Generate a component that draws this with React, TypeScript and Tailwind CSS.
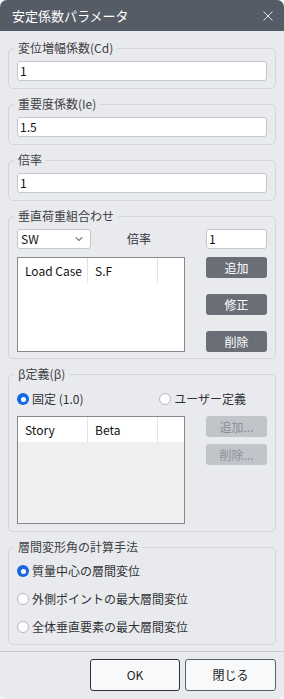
import { ChevronDown } from 'lucide-react'

const font = "font-['Noto_Sans_CJK_JP','Noto_Sans',sans-serif]"

function Radio({ checked, label, className = '' }: { checked?: boolean; label: string; className?: string }) {
  return (
    <div className={`flex items-center h-[16px] ${className}`}>
      {checked ? (
        <span className="w-[12px] h-[12px] rounded-full bg-[#1668e3] flex items-center justify-center">
          <span className="w-[5px] h-[5px] rounded-full bg-white" />
        </span>
      ) : (
        <span className="w-[12px] h-[12px] rounded-full bg-white border border-[#b4b8be]" />
      )}
      <span className="ml-[3px] text-[12px] leading-[16px] text-[#303236]">{label}</span>
    </div>
  )
}

function Group({ title, children, className = '' }: { title: string; children: React.ReactNode; className?: string }) {
  return (
    <fieldset className={`border border-[#d3d5da] rounded-[5px] px-2 ${className}`}>
      <legend className="ml-[-3px] px-[4px] text-[12px] leading-[16px] text-[#3e4044]">{title}</legend>
      {children}
    </fieldset>
  )
}

function TextBox({ value }: { value: string }) {
  return (
    <div className="h-[20px] bg-white border border-[#c3c7cd] rounded-[3px] pl-[2px] flex items-center text-[12px] text-[#111]">
      <span>{value}</span>
    </div>
  )
}

function DarkButton({ label }: { label: string }) {
  return (
    <div className="h-[21px] rounded-[3px] bg-[#6a6f77] text-white text-[12px] flex items-center justify-center">
      {label}
    </div>
  )
}

function GreyButton({ label }: { label: string }) {
  return (
    <div className="h-[21px] rounded-[3px] bg-[#c1c5ca] text-[#8b9097] text-[12px] flex items-center justify-center">
      {label}
    </div>
  )
}

export default function App() {
  return (
    <div className={`w-[284px] h-[699px] bg-[#f5f5f5] ${font}`}>
      <div className="h-full rounded-[7px] bg-[#e9eaee] flex flex-col overflow-hidden">
        <div className="h-[31px] bg-[#565c66] flex items-center justify-between pl-[12px] pr-[11px] shrink-0">
          <span className="text-[13px] text-white">安定係数パラメータ</span>
          <svg width="10" height="10" viewBox="0 0 10 10" className="text-[#e4e6ea]">
            <path d="M0.5 0.5 L9.5 9.5 M9.5 0.5 L0.5 9.5" stroke="currentColor" strokeWidth="1" />
          </svg>
        </div>

        <div className="flex-1 px-2 pt-[9px] flex flex-col gap-[7px]">
          <Group title="変位増幅係数(Cd)" className="pb-[7px]">
            <div className="mt-[5px]">
              <TextBox value="1" />
            </div>
          </Group>
          <Group title="重要度係数(Ie)" className="pb-[7px]">
            <div className="mt-[5px]">
              <TextBox value="1.5" />
            </div>
          </Group>
          <Group title="倍率" className="pb-[7px]">
            <div className="mt-[5px]">
              <TextBox value="1" />
            </div>
          </Group>

          <Group title="垂直荷重組合わせ" className="pb-[6px]">
            <div className="mt-[5px] flex items-center">
              <div className="w-[74px] h-[20px] bg-white border border-[#c3c7cd] rounded-[3px] pl-[3px] pr-[5px] flex items-center justify-between text-[12px] text-[#111]">
                <span>SW</span>
                <ChevronDown size={12} strokeWidth={2.2} className="text-[#7a7e85]" />
              </div>
              <span className="ml-[36px] text-[12px] text-[#303236]">倍率</span>
              <div className="ml-auto w-[61px]">
                <TextBox value="1" />
              </div>
            </div>
            <div className="mt-[8px] flex">
              <div className="w-[168px] h-[95px] bg-white border border-[#85888d]">
                <div className="h-[25px] flex text-[12px] text-[#111]">
                  <div className="w-[70px] border-r border-[#e2e3e6] pl-[7px] flex items-center">Load Case</div>
                  <div className="w-[70px] border-r border-[#e2e3e6] pl-[7px] flex items-center">S.F</div>
                </div>
              </div>
              <div className="ml-auto w-[61px] flex flex-col justify-between">
                <DarkButton label="追加" />
                <DarkButton label="修正" />
                <DarkButton label="削除" />
              </div>
            </div>
          </Group>

          <Group title="β定義(β)" className="pb-[7px]">
            <div className="mt-[9px] flex items-center pr-[21px]">
              <Radio checked label="固定 (1.0)" />
              <Radio label="ユーザー定義" className="ml-auto" />
            </div>
            <div className="mt-[9px] flex">
              <div className="w-[168px] h-[108px] bg-[#efeff0] border border-[#85888d] flex flex-col">
                <div className="h-[25px] bg-white flex text-[12px] text-[#111]">
                  <div className="w-[70px] border-r border-[#e2e3e6] pl-[7px] flex items-center">Story</div>
                  <div className="w-[70px] border-r border-[#e2e3e6] pl-[7px] flex items-center">Beta</div>
                </div>
              </div>
              <div className="ml-auto w-[61px] flex flex-col gap-[7px]">
                <GreyButton label="追加..." />
                <GreyButton label="削除..." />
              </div>
            </div>
          </Group>

          <Group title="層間変形角の計算手法" className="pb-[9px]">
            <div className="mt-[8px] flex flex-col gap-[12px]">
              <Radio checked label="質量中心の層間変位" />
              <Radio label="外側ポイントの最大層間変位" />
              <Radio label="全体垂直要素の最大層間変位" />
            </div>
          </Group>
        </div>

        <div className="h-[48px] shrink-0 border-t border-[#c9cbcf] pt-[7px] pb-[8px] pr-[8px] flex justify-end gap-[5px]">
          <div className="w-[90px] h-[32px] bg-[#f8f9fb] border border-[#2e3033] rounded-[3px] flex items-center justify-center text-[12px] text-[#222]">
            OK
          </div>
          <div className="w-[91px] h-[32px] bg-[#f8f9fb] border border-[#5c6066] rounded-[3px] flex items-center justify-center text-[12px] text-[#222]">
            閉じる
          </div>
        </div>
      </div>
    </div>
  )
}
